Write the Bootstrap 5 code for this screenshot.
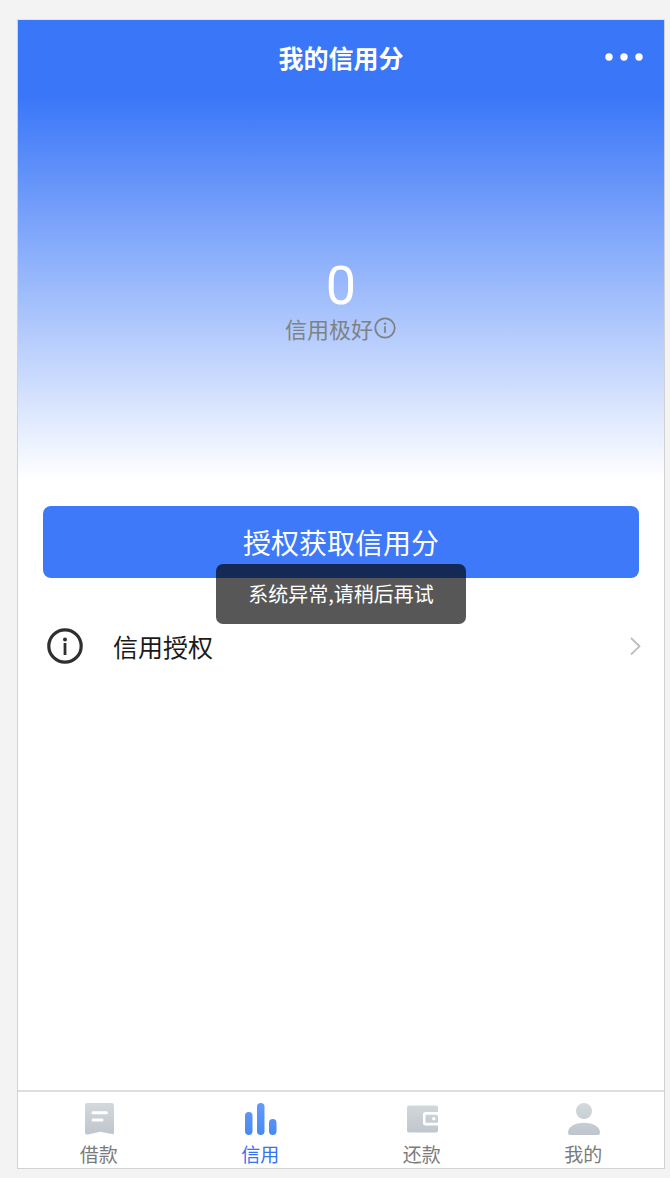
<!DOCTYPE html>
<html lang="zh-CN">
<head>
<meta charset="utf-8">
<meta name="viewport" content="width=device-width, initial-scale=1">
<title>我的信用分</title>
<link href="https://cdn.jsdelivr.net/npm/bootstrap@5.3.0/dist/css/bootstrap.min.css" rel="stylesheet">
<style>
  body {
    background: #f3f3f3;
    font-family: "Noto Sans CJK SC", sans-serif;
    padding: 19px 5px 9px 17px;
  }
  .phone-frame {
    min-height: calc(100vh - 28px);
    background: #fff;
    border: 1px solid #d2d2d2;
    border-top-color: #e4e4e4;
  }
  .score-hero {
    min-height: 460px;
    background: linear-gradient(#3976f8 76px, #fff);
  }
  .top-bar { height: 74px; padding: 0 20px; }
  .top-title { font-size: 25px; line-height: 36px; font-weight: 700; }
  .side-slot { width: 40px; }
  .score-block { padding-top: 162px; }
  .score-value { font-family: Roboto, sans-serif; font-size: 54px; line-height: 60px; }
  .score-level { font-size: 22px; line-height: 24px; color: #7e8286; }
  .action-area { padding: 26px 25px 0; }
  .btn-credit {
    --bs-btn-bg: #3d79f8;
    --bs-btn-color: #fff;
    --bs-btn-hover-bg: #2f6bec;
    --bs-btn-hover-color: #fff;
    --bs-btn-active-bg: #2862de;
    --bs-btn-active-color: #fff;
    --bs-btn-border-radius: 8px;
    --bs-btn-border-width: 0;
    height: 72px;
    font-size: 28px;
    line-height: 40px;
  }
  .auth-row {
    margin-top: 42px;
    padding: 0 20px 0 28px;
    height: 52px;
    font-size: 25px;
    line-height: 36px;
    color: #1a1a1a;
    gap: 29px;
  }
  .notice {
    width: 250px;
    height: 60px;
    border-radius: 7px;
    background: rgba(0, 0, 0, .66);
    color: #fff;
    font-size: 20px;
    line-height: 30px;
  }
  .tab-strip { border-top: 2px solid #dedede; height: 78px; }
  .tab-item { color: #7b7b7b; font-size: 19px; line-height: 28px; padding-top: 10px; gap: 4px; }
  .tab-item.active { color: #3472f2; }
</style>
</head>
<body>
<div class="phone-frame position-relative d-flex flex-column">
  <header class="score-hero text-white">
    <div class="top-bar d-flex align-items-center justify-content-between">
      <span class="side-slot"></span>
      <h1 class="top-title m-0">我的信用分</h1>
      <button type="button" class="btn border-0 p-0 side-slot d-flex" aria-label="更多">
        <svg width="40" height="10" viewBox="0 0 40 10" fill="#fff" aria-hidden="true"><circle cx="5" cy="5" r="3.7"/><circle cx="20" cy="5" r="3.7"/><circle cx="35" cy="5" r="3.7"/></svg>
      </button>
    </div>
    <div class="score-block text-center">
      <div class="score-value">0</div>
      <div class="score-level d-flex align-items-center justify-content-center">
        <span>信用极好</span>
        <svg width="24" height="24" viewBox="0 0 24 24" fill="none" stroke="currentColor" aria-hidden="true"><circle cx="12" cy="12" r="9.7" stroke-width="1.8"/><circle cx="12" cy="7.600" r="1.2" fill="currentColor" stroke="none"/><path d="M12 10.200V17" stroke-width="1.7"/></svg>
      </div>
    </div>
  </header>

  <main class="flex-grow-1">
    <div class="action-area">
      <button type="button" class="btn btn-credit w-100">授权获取信用分</button>
    </div>
    <a href="#" class="auth-row d-flex align-items-center text-decoration-none">
      <svg width="38" height="38" viewBox="0 0 38 38" fill="none" stroke="#2f2f2f" aria-hidden="true"><circle cx="19" cy="19" r="16.2" stroke-width="3.2"/><circle cx="19" cy="12.500" r="2" fill="#2f2f2f" stroke="none"/><path d="M19 16v12" stroke-width="2.8"/></svg>
      <span>信用授权</span>
      <svg class="ms-auto" width="16" height="20" viewBox="0 0 16 20" fill="none" stroke="#bdbdbd" stroke-width="1.8" aria-hidden="true"><path d="M3 2L11.500 10.300 3 18.500"/></svg>
    </a>
  </main>

  <nav class="tab-strip d-flex">
    <a href="#" class="tab-item flex-fill w-25 d-flex flex-column align-items-center text-decoration-none">
      <svg class="flex-shrink-0" width="34" height="34" viewBox="0 0 34 34" aria-hidden="true">
        <defs><linearGradient id="greyFade" x1="0" y1="0" x2="0" y2="34" gradientUnits="userSpaceOnUse"><stop stop-color="#d3dadd"/><stop offset="1" stop-color="#bec4cc"/></linearGradient></defs>
        <path d="M5 1H30a2 2 0 0 1 2 2V31q0 2-2 1L18 29.800 6 32.500Q3 33 3 31V3a2 2 0 0 1 2-2Z" fill="url(#greyFade)"/><path d="M11 10.800H24.500M11 18H20" stroke="#fff" stroke-width="3" stroke-linecap="round"/>
      </svg>
      <span>借款</span>
    </a>
    <a href="#" class="tab-item active flex-fill w-25 d-flex flex-column align-items-center text-decoration-none" aria-current="page">
      <svg class="flex-shrink-0" width="34" height="34" viewBox="0 0 34 34" aria-hidden="true">
        <defs><linearGradient id="blueFade" x1="0" y1="0" x2="0" y2="34" gradientUnits="userSpaceOnUse"><stop stop-color="#659bfa"/><stop offset="1" stop-color="#468af2"/></linearGradient></defs>
        <g fill="url(#blueFade)"><rect x="2" y="10" width="7.500" height="23" rx="3.700"/><rect x="14" y="1" width="7.500" height="32" rx="3.700"/><rect x="26" y="17" width="7.500" height="16" rx="3.700"/></g>
      </svg>
      <span>信用</span>
    </a>
    <a href="#" class="tab-item flex-fill w-25 d-flex flex-column align-items-center text-decoration-none">
      <svg class="flex-shrink-0" width="34" height="34" viewBox="0 0 34 34" aria-hidden="true">
        <path d="M4 3.500H31a2 2 0 0 1 2 2V10H20.500a2.500 2.500 0 0 0-2.500 2.500V21a2.500 2.500 0 0 0 2.500 2.500H33V28.500a2 2 0 0 1-2 2H4a2 2 0 0 1-2-2V5.500a2 2 0 0 1 2-2Z" fill="url(#greyFade)"/><path d="M20.500 12.800H31.500a1.500 1.500 0 0 1 1.500 1.500V20.800H20.500Z" fill="url(#greyFade)"/><circle cx="28.800" cy="16.700" r="1.700" fill="#fff"/>
      </svg>
      <span>还款</span>
    </a>
    <a href="#" class="tab-item flex-fill w-25 d-flex flex-column align-items-center text-decoration-none">
      <svg class="flex-shrink-0" width="34" height="34" viewBox="0 0 34 34" aria-hidden="true">
        <g fill="url(#greyFade)"><circle cx="18" cy="9" r="8"/><path d="M2 30.500C2 25 9 20.800 18 20.800S34 25 34 30.500Q34 33 31.500 33H4.500Q2 33 2 30.500Z"/></g>
      </svg>
      <span>我的</span>
    </a>
  </nav>

  <div class="notice position-absolute top-50 start-50 translate-middle d-flex align-items-center justify-content-center" role="alert">系统异常,请稍后再试</div>
</div>
<script src="https://cdn.jsdelivr.net/npm/bootstrap@5.3.0/dist/js/bootstrap.bundle.min.js"></script>
</body>
</html>
